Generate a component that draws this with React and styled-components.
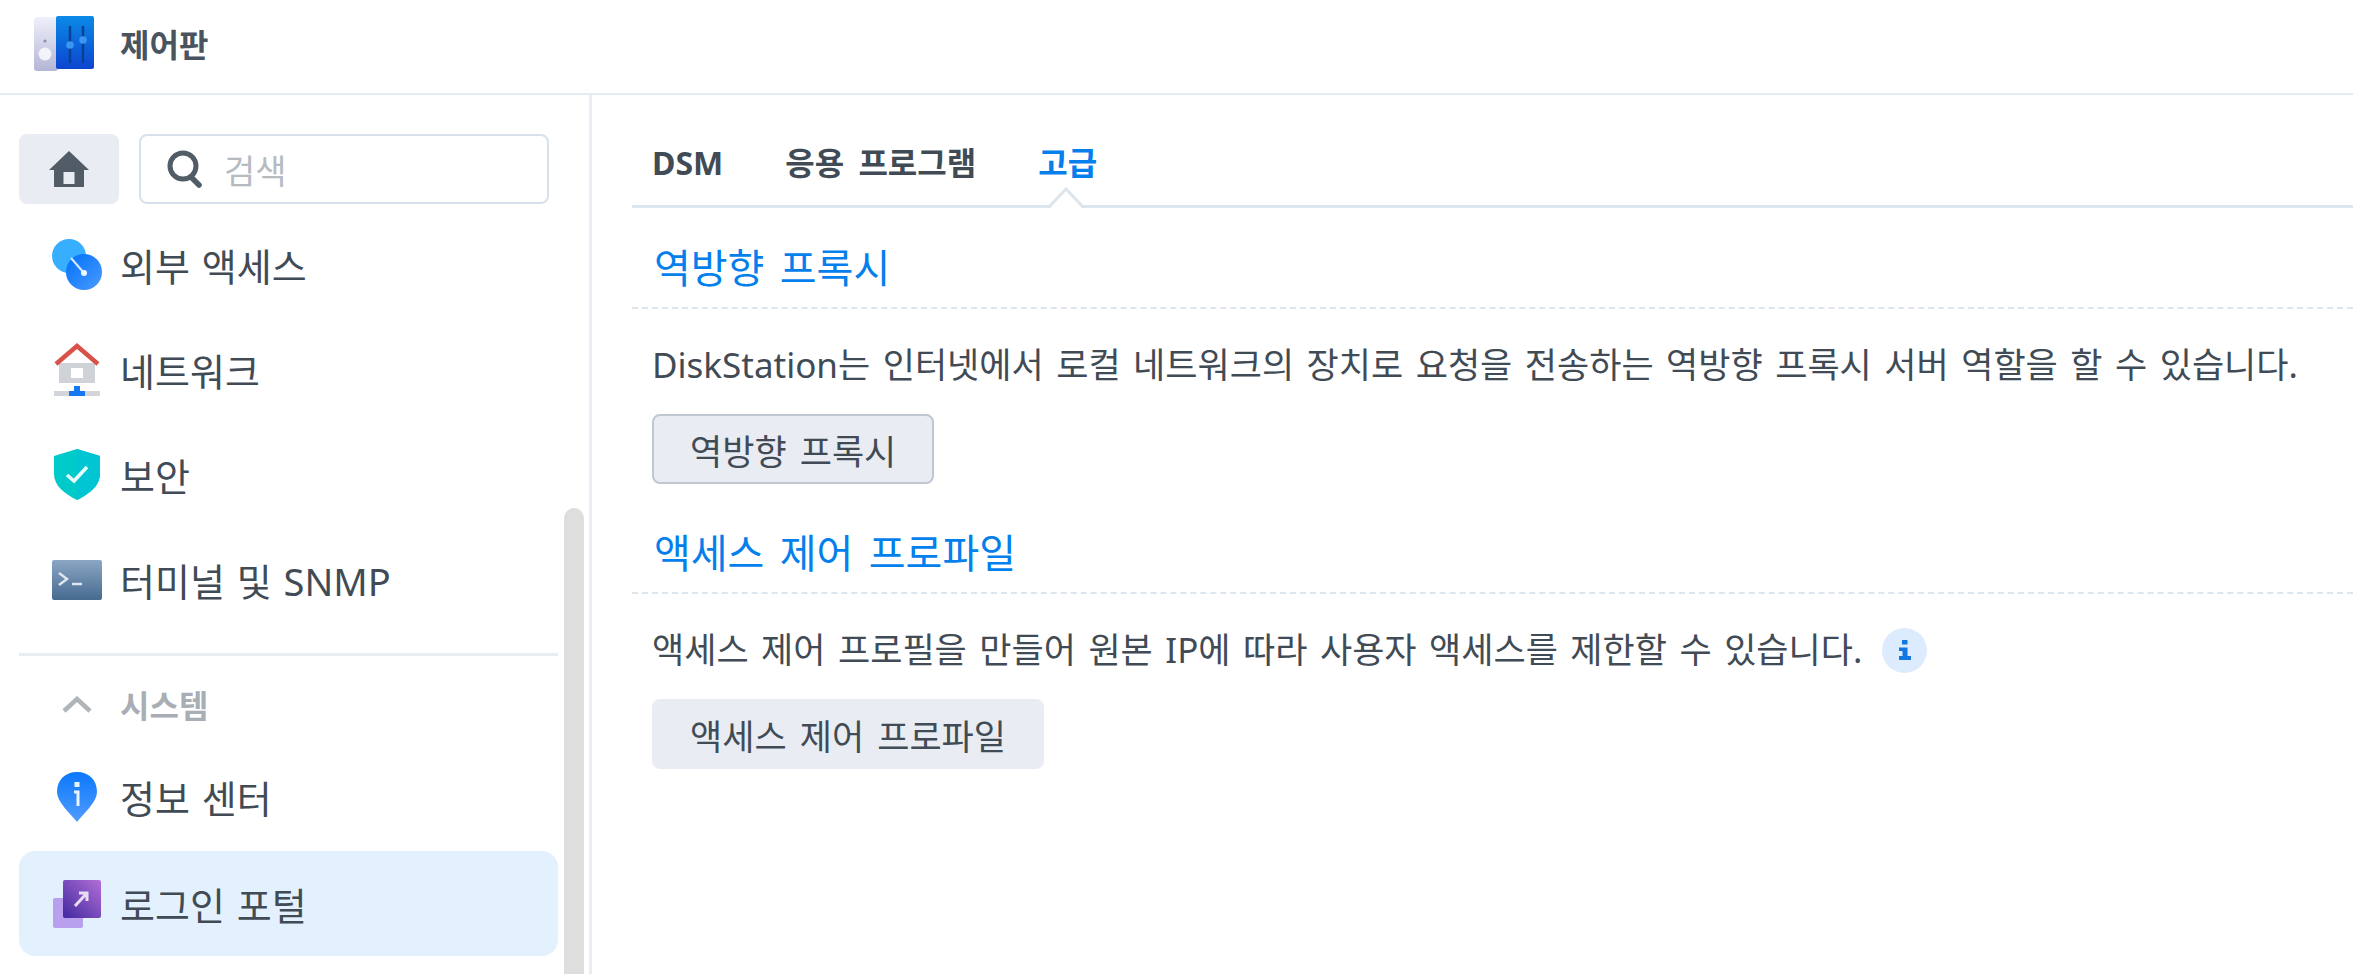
import React from 'react';
import styled, { createGlobalStyle } from 'styled-components';

const GlobalStyle = createGlobalStyle`
  html, body {
    margin: 0;
    padding: 0;
    height: 100%;
    background: #fff;
    overflow: hidden;
  }
  body {
    font-family: "Noto Sans", "Noto Sans CJK KR", sans-serif;
    color: #414b55;
  }
`;

const Page = styled.div`
  width: 2353px;
  height: 974px;
  display: flex;
  flex-direction: column;
  overflow: hidden;
`;

const TitleBar = styled.header`
  height: 95px;
  box-sizing: border-box;
  flex: none;
  display: flex;
  align-items: center;
  gap: 26px;
  padding: 0 0 6px 34px;
  border-bottom: 2px solid #e6ebf1;
`;

const AppTitle = styled.div`
  font-size: 32px;
  font-weight: 700;
  color: #4a545e;
  margin-top: -2px;
`;

const Body = styled.div`
  flex: 1;
  display: flex;
  min-height: 0;
`;

const Sidebar = styled.aside`
  position: relative;
  width: 592px;
  box-sizing: border-box;
  flex: none;
  border-right: 3px solid #e9eef4;
  padding: 39px 0 0 19px;
  overflow: hidden;
`;

const SearchRow = styled.div`
  display: flex;
  gap: 20px;
  margin-bottom: 8px;
`;

const HomeButton = styled.div`
  width: 100px;
  height: 70px;
  border-radius: 8px;
  background: #e9edf3;
  display: flex;
  align-items: center;
  justify-content: center;
`;

const SearchBox = styled.div`
  width: 410px;
  height: 70px;
  box-sizing: border-box;
  border: 2px solid #d8e1ea;
  border-radius: 8px;
  display: flex;
  align-items: center;
  gap: 21px;
  padding-left: 26px;
`;

const Placeholder = styled.span`
  font-size: 34px;
  color: #b6bbc2;
`;

const MenuList = styled.div`
  width: 539px;
  display: flex;
  flex-direction: column;
`;

const MenuItem = styled.div`
  height: 105px;
  flex: none;
  display: flex;
  align-items: center;
  border-radius: 16px;
  padding-left: 32px;
  gap: 18px;
  font-size: 38px;
  word-spacing: 2px;
  margin-top: ${(p) => (p.$active ? '2px' : '0')};
  background: ${(p) => (p.$active ? '#e3f0fd' : 'transparent')};
`;

const MenuIcon = styled.div`
  width: 51px;
  height: 60px;
  flex: none;
  display: flex;
  align-items: center;
  justify-content: center;
`;

const GroupDivider = styled.div`
  height: 3px;
  background: #e8edf3;
  margin-top: 21px;
`;

const GroupHeader = styled.div`
  height: 88px;
  box-sizing: border-box;
  padding: 8px 0 0 32px;
  display: flex;
  align-items: center;
  gap: 18px;
  font-size: 32px;
  font-weight: 700;
  color: #a9aeb4;
`;

const ScrollThumb = styled.div`
  position: absolute;
  left: 564px;
  top: 413px;
  bottom: -20px;
  width: 20px;
  border-radius: 10px;
  background: #dedede;
`;

const Content = styled.main`
  flex: 1;
  min-width: 0;
  padding: 0 0 0 40px;
`;

const TabBar = styled.div`
  position: relative;
  height: 113px;
  box-sizing: border-box;
  display: flex;
  gap: 62px;
  padding: 44px 0 0 20px;
  border-bottom: 3px solid #dde5ed;
`;

const Tab = styled.div`
  font-size: 32px;
  font-weight: 700;
  line-height: 48px;
  word-spacing: 6px;
  color: ${(p) => (p.$active ? '#057feb' : '#414b55')};
`;

const TabCaret = styled.svg`
  position: absolute;
  left: 416px;
  bottom: -3px;
  width: 36px;
  height: 21px;
`;

const Section = styled.section`
  margin-bottom: 9px;
`;

const SectionTitle = styled.h2`
  margin: 0;
  height: 101px;
  box-sizing: border-box;
  padding: 0 0 15px 22px;
  display: flex;
  align-items: flex-end;
  font-size: 40px;
  line-height: 48px;
  font-weight: 400;
  word-spacing: 5px;
  color: #057feb;
  border-bottom: 2px dashed #dde5ed;
`;

const Description = styled.div`
  margin: 34px 0 0 20px;
  height: 44px;
  font-size: 35px;
  line-height: 44px;
  word-spacing: 3.4px;
  display: flex;
  align-items: center;
  gap: 20px;
`;

const ActionButton = styled.div`
  display: inline-flex;
  align-items: center;
  justify-content: center;
  margin: 27px 0 0 20px;
  height: 70px;
  box-sizing: border-box;
  padding: 0 36px;
  font-size: 35px;
  word-spacing: 4px;
  border-radius: 8px;
  background: #e9edf3;
  border: 2px solid ${(p) => (p.$outlined ? '#bfc7d1' : '#e9edf3')};
`;

const InfoDot = styled.span`
  width: 45px;
  height: 45px;
  flex: none;
  border-radius: 50%;
  background: #dcebfd;
  display: inline-flex;
  align-items: center;
  justify-content: center;
`;

const ControlPanelIcon = () => (
  <svg width="60" height="56" viewBox="0 0 60 56">
    <defs>
      <linearGradient id="cpLeft" x1="0" y1="0" x2="0" y2="1">
        <stop offset="0" stopColor="#eef0fb" />
        <stop offset="1" stopColor="#b4b6d6" />
      </linearGradient>
      <linearGradient id="cpRight" x1="0" y1="0" x2="0" y2="1">
        <stop offset="0" stopColor="#0b8ae6" />
        <stop offset="1" stopColor="#0c45d0" />
      </linearGradient>
    </defs>
    <rect x="0" y="1" width="24" height="54" rx="3" fill="url(#cpLeft)" />
    <rect x="22" y="0" width="38" height="53" rx="2" fill="url(#cpRight)" />
    <circle cx="11" cy="25" r="1.6" fill="#8e90a8" />
    <circle cx="11" cy="38" r="6.5" fill="#f3f3fa" />
    <path d="M36 10V47M49 10V47" stroke="#0b3f94" strokeWidth="2.4" />
    <circle cx="36" cy="29" r="3.8" fill="#3d95f2" />
    <circle cx="49" cy="24" r="3.8" fill="#3d95f2" />
  </svg>
);

const HomeIcon = () => (
  <svg width="42" height="37" viewBox="0 0 42 37">
    <path
      fillRule="evenodd"
      d="M21 0L41 19H36V36H6V19H1ZM15.5 21V33H26.5V21Z"
      fill="#515c66"
    />
  </svg>
);

const SearchIcon = () => (
  <svg width="36" height="38" viewBox="0 0 36 38">
    <circle cx="16" cy="16" r="13" fill="none" stroke="#515c66" strokeWidth="5" />
    <path d="M25 28L32 35" stroke="#515c66" strokeWidth="5.5" strokeLinecap="round" />
  </svg>
);

const ExternalIcon = () => (
  <svg width="50" height="51" viewBox="0 0 50 51">
    <defs>
      <linearGradient id="extB" x1="0" y1="0" x2="1" y2="1">
        <stop offset="0" stopColor="#0070fa" />
        <stop offset="1" stopColor="#4a9bff" />
      </linearGradient>
    </defs>
    <circle cx="17" cy="17" r="17" fill="#38aeff" />
    <circle cx="32" cy="33" r="18" fill="url(#extB)" />
    <path d="M19 19L32 34" stroke="#d8ecff" strokeWidth="2" />
    <circle cx="32" cy="34" r="3" fill="#eef7ff" />
  </svg>
);

const NetworkIcon = () => (
  <svg width="46" height="53" viewBox="0 0 46 53">
    <path d="M5 20H41V40H5Z" fill="#cfd3d8" />
    <rect x="17" y="25" width="12" height="10" fill="#fff" />
    <path d="M2 21L23 3L44 21" fill="none" stroke="#d9524a" strokeWidth="4.5" />
    <rect x="0" y="48" width="46" height="5" fill="#d2d6db" />
    <rect x="15" y="48" width="16" height="5" fill="#1677f2" />
    <rect x="20" y="43" width="6" height="6" fill="#1677f2" />
  </svg>
);

const ShieldIcon = () => (
  <svg width="46" height="51" viewBox="0 0 46 51">
    <path d="M23 0L46 7V25C46 37 35 45 23 51C11 45 0 37 0 25V7Z" fill="#00c9c9" />
    <path d="M23 0L46 7V25C46 37 35 45 23 51Z" fill="#02c5d3" />
    <path d="M13 26L20 32L33 18" fill="none" stroke="#e6fbfa" strokeWidth="3.6" />
  </svg>
);

const TerminalIcon = () => (
  <svg width="50" height="40" viewBox="0 0 50 40">
    <defs>
      <linearGradient id="termBg" x1="0" y1="0" x2="0" y2="1">
        <stop offset="0" stopColor="#8ba6c4" />
        <stop offset="1" stopColor="#466a90" />
      </linearGradient>
    </defs>
    <rect width="50" height="40" rx="2" fill="url(#termBg)" />
    <path d="M7 13L15 19L7 25" fill="none" stroke="#dfe7ef" strokeWidth="2.4" />
    <path d="M20 24H30" stroke="#dfe7ef" strokeWidth="2.4" />
  </svg>
);

const Chevron = () => (
  <svg width="30" height="17" viewBox="0 0 30 17">
    <path d="M2 15L15 3L28 15" fill="none" stroke="#b0b5ba" strokeWidth="4.5" />
  </svg>
);

const InfoCenterIcon = () => (
  <svg width="40" height="50" viewBox="0 0 40 50">
    <defs>
      <linearGradient id="pinBg" x1="0" y1="0" x2="0" y2="1">
        <stop offset="0" stopColor="#0a78fb" />
        <stop offset="1" stopColor="#519cff" />
      </linearGradient>
    </defs>
    <path d="M20 0C32 0 40 8 40 20C40 30 27 41 20 50C13 41 0 30 0 20C0 8 8 0 20 0Z" fill="url(#pinBg)" />
    <rect x="17.5" y="10" width="5" height="5" fill="#eaf4ff" />
    <path d="M17 20H21V34" fill="none" stroke="#eaf4ff" strokeWidth="3" />
  </svg>
);

const PortalIcon = () => (
  <svg width="48" height="48" viewBox="0 0 48 48">
    <defs>
      <linearGradient id="portalBg" x1="0" y1="1" x2="1" y2="0">
        <stop offset="0" stopColor="#4128a0" />
        <stop offset="1" stopColor="#b26fd6" />
      </linearGradient>
    </defs>
    <rect x="0" y="18" width="30" height="30" rx="2" fill="#b8a0ee" />
    <rect x="10" y="0" width="38" height="38" rx="2" fill="url(#portalBg)" />
    <path d="M22 26L33 14M26 13H34V21" fill="none" stroke="#e8dcf5" strokeWidth="3" />
  </svg>
);

const InfoGlyph = () => (
  <svg width="14" height="20" viewBox="0 0 14 20">
    <path d="M4 0H9.500V4.500H4ZM1 7.500H9.500V16H13V20H1V16H4.500V11H1Z" fill="#1078e0" />
  </svg>
);

const menuTop = [
  { label: '외부 액세스', icon: <ExternalIcon /> },
  { label: '네트워크', icon: <NetworkIcon /> },
  { label: '보안', icon: <ShieldIcon /> },
  { label: '터미널 및 SNMP', icon: <TerminalIcon /> },
];

const menuSystem = [
  { label: '정보 센터', icon: <InfoCenterIcon /> },
  { label: '로그인 포털', icon: <PortalIcon />, active: true },
];

function App() {
  return (
    <Page>
      <GlobalStyle />
      <TitleBar>
        <ControlPanelIcon />
        <AppTitle>제어판</AppTitle>
      </TitleBar>
      <Body>
        <Sidebar>
          <SearchRow>
            <HomeButton>
              <HomeIcon />
            </HomeButton>
            <SearchBox>
              <SearchIcon />
              <Placeholder>검색</Placeholder>
            </SearchBox>
          </SearchRow>
          <MenuList>
            {menuTop.map((item) => (
              <MenuItem key={item.label}>
                <MenuIcon>{item.icon}</MenuIcon>
                {item.label}
              </MenuItem>
            ))}
            <GroupDivider />
            <GroupHeader>
              <MenuIcon>
                <Chevron />
              </MenuIcon>
              시스템
            </GroupHeader>
            {menuSystem.map((item) => (
              <MenuItem key={item.label} $active={item.active}>
                <MenuIcon>{item.icon}</MenuIcon>
                {item.label}
              </MenuItem>
            ))}
          </MenuList>
          <ScrollThumb />
        </Sidebar>
        <Content>
          <TabBar>
            <Tab>DSM</Tab>
            <Tab>응용 프로그램</Tab>
            <Tab $active>고급</Tab>
            <TabCaret viewBox="0 0 36 21">
              <path d="M0 20H1L18 2L35 20H36V21H0Z" fill="#fff" />
              <path d="M0 20H1L18 2L35 20H36" fill="none" stroke="#dde5ed" strokeWidth="3" />
            </TabCaret>
          </TabBar>
          <Section>
            <SectionTitle>역방향 프록시</SectionTitle>
            <Description>
              DiskStation는 인터넷에서 로컬 네트워크의 장치로 요청을 전송하는 역방향 프록시 서버 역할을 할 수 있습니다.
            </Description>
            <ActionButton $outlined>역방향 프록시</ActionButton>
          </Section>
          <Section>
            <SectionTitle>액세스 제어 프로파일</SectionTitle>
            <Description>
              액세스 제어 프로필을 만들어 원본 IP에 따라 사용자 액세스를 제한할 수 있습니다.
              <InfoDot>
                <InfoGlyph />
              </InfoDot>
            </Description>
            <ActionButton>액세스 제어 프로파일</ActionButton>
          </Section>
        </Content>
      </Body>
    </Page>
  );
}

export default App;
